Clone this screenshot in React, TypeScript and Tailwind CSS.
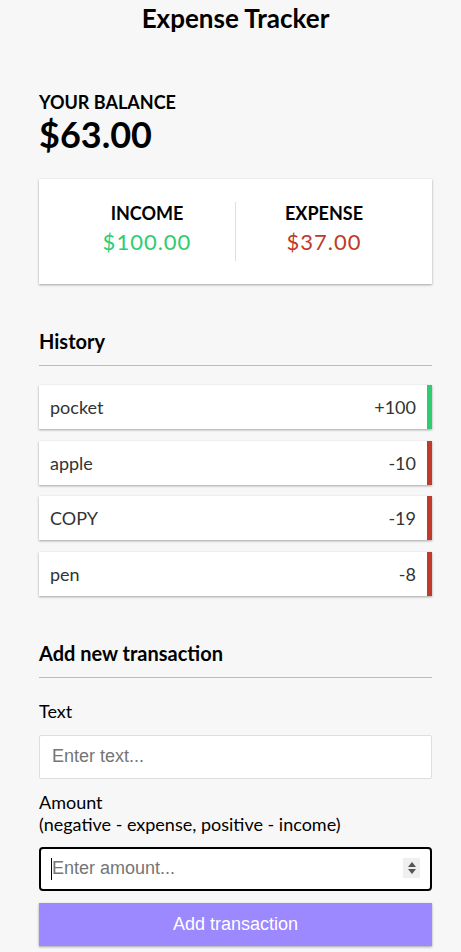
import React from 'react';

type Tx = { id: number; text: string; amount: number };

const transactions: Tx[] = [
  { id: 1, text: 'pocket', amount: 100 },
  { id: 2, text: 'apple', amount: -10 },
  { id: 3, text: 'COPY', amount: -19 },
  { id: 4, text: 'pen', amount: -8 },
];

const App: React.FC = () => {
  const income = transactions.filter(t => t.amount > 0).reduce((s, t) => s + t.amount, 0);
  const expense = transactions.filter(t => t.amount < 0).reduce((s, t) => s - t.amount, 0);
  const balance = income - expense;

  return (
    <div className="min-h-screen bg-[#f7f7f7] font-['Lato',sans-serif] text-[18px] text-black">
      <div className="ml-[39px] w-[393px] pt-[3px]">
        <h2 className="text-center text-[26px] font-bold leading-[31px]">Expense Tracker</h2>

        <div className="mt-[57px]">
          <h4 className="text-[18px] font-bold uppercase leading-[22px]">Your Balance</h4>
          <h1 className="text-[36px] font-bold leading-[43px]">${balance.toFixed(2)}</h1>
        </div>

        {/* income / expense */}
        <div className="mt-[23px] flex bg-white px-[20px] py-[23px] shadow-[0_1px_3px_rgba(0,0,0,0.12),0_1px_2px_rgba(0,0,0,0.24)]">
          <div className="flex-1 border-r border-[#dedede] pb-[4px] text-center">
            <h4 className="font-bold uppercase leading-[22px]">Income</h4>
            <p className="mt-[2px] text-[22px] leading-[31px] tracking-[1px] text-[#2ecc71]">${income.toFixed(2)}</p>
          </div>
          <div className="flex-1 pb-[4px] text-center">
            <h4 className="font-bold uppercase leading-[22px]">Expense</h4>
            <p className="mt-[2px] text-[22px] leading-[31px] tracking-[1px] text-[#c0392b]">${expense.toFixed(2)}</p>
          </div>
        </div>

        <h3 className="mt-[45px] border-b border-[#bbb] pb-[12px] text-[20px] font-bold leading-[24px]">History</h3>
        <ul className="mt-[19px] flex flex-col gap-[11.67px]">
          {transactions.map(t => (
            <li
              key={t.id}
              className={`flex justify-between bg-white py-[10px] pl-[11px] pr-[11px] leading-[24px] text-[#333] shadow-[0_1px_3px_rgba(0,0,0,0.12),0_1px_2px_rgba(0,0,0,0.24)] border-r-[5px] ${
                t.amount > 0 ? 'border-[#2ecc71]' : 'border-[#c0392b]'
              }`}
            >
              <span>{t.text}</span>
              <span>{t.amount > 0 ? '+' : '-'}{Math.abs(t.amount)}</span>
            </li>
          ))}
        </ul>

        <h3 className="mt-[45px] border-b border-[#bbb] pb-[12px] text-[20px] font-bold leading-[24px]">Add new transaction</h3>
        <form onSubmit={e => e.preventDefault()}>
          <label className="mt-[22px] block leading-[22px]">Text</label>
          <input
            type="text"
            placeholder="Enter text..."
            className="mt-[13px] block h-[44px] w-full rounded-[2px] border border-[#dedede] bg-white px-[12px] font-['Liberation_Sans',Arial,sans-serif] text-[18px] outline-none placeholder:text-[#757575]"
          />
          <label className="mt-[12px] block leading-[22px]">
            Amount <br />
            (negative - expense, positive - income)
          </label>
          <div className="relative mt-[12px]">
            <input
              type="text"
              placeholder="Enter amount..."
              className="block h-[44px] w-full rounded-[4px] border-2 border-black bg-white px-[11px] font-['Liberation_Sans',Arial,sans-serif] text-[18px] outline-none placeholder:text-[#757575]"
            />
            {/* caret */}
            <span className="absolute left-[12px] top-[11px] h-[22px] w-px bg-black" />
            {/* spin buttons */}
            <span className="absolute right-[12px] top-[11px] flex h-[20px] w-[17px] flex-col items-center justify-center gap-[2px] bg-[#efefef]">
              <svg width="8" height="5" viewBox="0 0 8 5"><path d="M0 5L4 0L8 5Z" fill="#555" /></svg>
              <svg width="8" height="5" viewBox="0 0 8 5"><path d="M0 0L4 5L8 0Z" fill="#555" /></svg>
            </span>
          </div>
          <button
            type="submit"
            className="mt-[12px] block h-[43px] w-full bg-[#9c88ff] font-['Liberation_Sans',Arial,sans-serif] text-[18px] text-white shadow-[0_1px_3px_rgba(0,0,0,0.12),0_1px_2px_rgba(0,0,0,0.24)]"
          >
            Add transaction
          </button>
        </form>
        <div className="h-[30px]" />
      </div>
    </div>
  );
};

export default App;
